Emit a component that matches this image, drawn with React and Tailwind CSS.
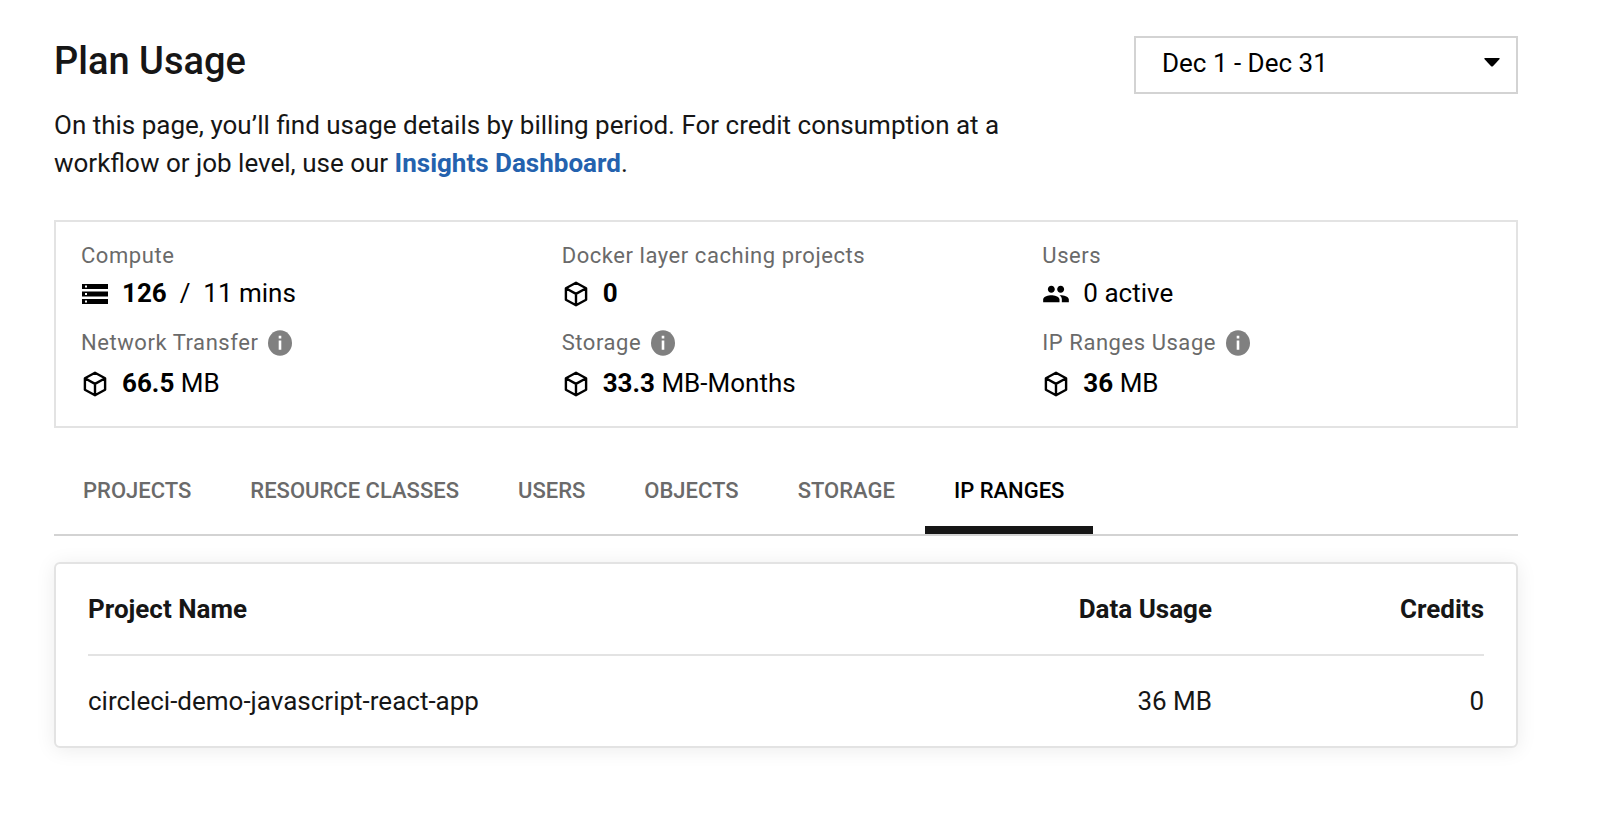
import { MdPeople } from "react-icons/md";

function StorageIcon() {
  return (
    <svg viewBox="0 0 26 20" className="h-5 w-[26px]" fill="currentColor" aria-hidden="true">
      <path
        fillRule="evenodd"
        d="M0 0h26v5H0zM3 1.5v2h2v-2zM0 7.5h26v5H0zM3 9v2h2V9zM0 15h26v5H0zM3 16.5v2h2v-2z"
      />
    </svg>
  );
}

function CubeIcon() {
  return (
    <svg viewBox="0 0 26 26" className="size-[26px]" fill="none" stroke="currentColor" strokeWidth="2.4" strokeLinejoin="round" aria-hidden="true">
      <path d="M13 1.7 23.1 7.3v11.4L13 24.3 2.9 18.7V7.3zM2.9 7.3 13 12.9l10.1-5.6M13 12.9v11.4" />
    </svg>
  );
}

function PeopleIcon() {
  return <MdPeople className="size-7 shrink-0" aria-hidden="true" />;
}

function InfoIcon() {
  return (
    <svg viewBox="0 0 24 26" className="h-[26px] w-6" aria-hidden="true">
      <ellipse cx="12" cy="13" rx="12" ry="12.7" fill="#808080" />
      <path d="M10.7 5.8h2.6v2.6h-2.6zM10.7 10.5h2.6v9.2h-2.6z" fill="#fff" />
    </svg>
  );
}

const stats = [
  { label: "Compute", icon: StorageIcon, value: "126", rest: "\u00a0/\u00a0 11 mins" },
  { label: "Docker layer caching projects", icon: CubeIcon, value: "0" },
  { label: "Users", icon: PeopleIcon, rest: "0 active" },
  { label: "Network Transfer", icon: CubeIcon, value: "66.5", rest: "MB", info: true },
  { label: "Storage", icon: CubeIcon, value: "33.3", rest: "MB-Months", info: true },
  { label: "IP Ranges Usage", icon: CubeIcon, value: "36", rest: "MB", info: true },
];

const tabs = ["PROJECTS", "RESOURCE CLASSES", "USERS", "OBJECTS", "STORAGE", "IP RANGES"];

function Stat({ label, icon: Icon, value, rest, info }) {
  return (
    <div>
      <dt className="flex items-center gap-2.5 text-[22px] leading-[26px] tracking-wide text-[#6a6a6a]">
        {label}
        {info && (
          <button type="button" aria-label={`About ${label}`} className="py-[3px]">
            <InfoIcon />
          </button>
        )}
      </dt>
      <dd className="mt-1 flex h-10 items-center gap-[13px] text-[26px] text-black">
        <span className="flex w-7 justify-center pt-0.5">
          <Icon />
        </span>
        <span>
          {value && <strong className="font-bold">{value}</strong>}
          {value && rest && " "}
          {rest}
        </span>
      </dd>
    </div>
  );
}

export default function App() {
  return (
    <main className="min-h-screen bg-white pt-9 pr-[84px] pb-20 pl-[54px] font-['Roboto',sans-serif] text-[26px] text-[#161616]">
      <header className="flex items-start justify-between gap-8">
        <div className="max-w-[960px]">
          <h1 className="text-[38px] leading-[50px] font-medium">Plan Usage</h1>
          <p className="mt-5 leading-[38px]">
            On this page, you’ll find usage details by billing period. For credit consumption at a workflow or job
            level, use our{" "}
            <a href="#insights" className="font-bold text-[#2462ae]">
              Insights Dashboard
            </a>
            .
          </p>
        </div>
        <div className="relative w-96 shrink-0">
          <select
            aria-label="Billing period"
            className="h-[58px] w-full appearance-none border-2 border-[#d3d3d3] bg-white pr-12 pb-1 pl-[26px] text-black"
          >
            <option>Dec 1 - Dec 31</option>
          </select>
          <svg viewBox="0 0 16 9" className="pointer-events-none absolute top-[22px] right-[18px] h-[9px] w-4" aria-hidden="true">
            <path d="M1 0h14q1.200 .4.4 1.300L8.900 8.200q-.9.800-1.800 0L.6 1.300Q-.2.400 1 0z" />
          </svg>
        </div>
      </header>

      <dl className="mt-[38px] grid grid-cols-3 gap-x-8 gap-y-3.5 border-2 border-[#e3e3e3] px-[25px] pt-[21px] pb-[23px]">
        {stats.map((s) => (
          <Stat key={s.label} {...s} />
        ))}
      </dl>

      <div role="tablist" className="mt-9 flex gap-px border-b-2 border-[#d3d3d3] text-[22px] font-medium">
        {tabs.map((t) => (
          <button
            key={t}
            type="button"
            role="tab"
            aria-selected={t === "IP RANGES"}
            className="h-[70px] border-b-8 border-transparent px-[29px] pb-2.5 text-[#6a6a6a] aria-selected:border-[#161616] aria-selected:text-black"
          >
            {t}
          </button>
        ))}
      </div>

      <section className="mt-[26px] rounded-md border-2 border-[#e3e3e3] bg-white px-8 shadow-[0_2px_20px_rgba(0,0,0,0.08)]">
        <table className="w-full">
          <thead>
            <tr className="h-[91px] border-b-2 border-[#e3e3e3]">
              <th scope="col" className="text-left font-bold">Project Name</th>
              <th scope="col" className="w-[272px] text-right font-bold">Data Usage</th>
              <th scope="col" className="w-[272px] text-right font-bold">Credits</th>
            </tr>
          </thead>
          <tbody>
            <tr className="h-[91px]">
              <td>circleci-demo-javascript-react-app</td>
              <td className="text-right">36 MB</td>
              <td className="text-right">0</td>
            </tr>
          </tbody>
        </table>
      </section>
    </main>
  );
}
